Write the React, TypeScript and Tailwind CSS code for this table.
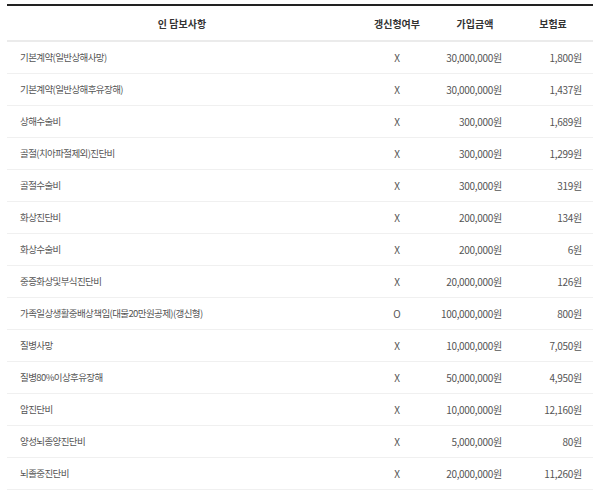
const rows: [string, string, string, string][] = [
  ["기본계약(일반상해사망)", "X", "30,000,000원", "1,800원"],
  ["기본계약(일반상해후유장해)", "X", "30,000,000원", "1,437원"],
  ["상해수술비", "X", "300,000원", "1,689원"],
  ["골절(치아파절제외)진단비", "X", "300,000원", "1,299원"],
  ["골절수술비", "X", "300,000원", "319원"],
  ["화상진단비", "X", "200,000원", "134원"],
  ["화상수술비", "X", "200,000원", "6원"],
  ["중증화상및부식진단비", "X", "20,000,000원", "126원"],
  ["가족일상생활중배상책임(대물20만원공제)(갱신형)", "O", "100,000,000원", "800원"],
  ["질병사망", "X", "10,000,000원", "7,050원"],
  ["질병80%이상후유장해", "X", "50,000,000원", "4,950원"],
  ["암진단비", "X", "10,000,000원", "12,160원"],
  ["양성뇌종양진단비", "X", "5,000,000원", "80원"],
  ["뇌졸중진단비", "X", "20,000,000원", "11,260원"],
];

export default function App() {
  return (
    <div className="w-[600px] h-[497px] bg-white pt-1 px-[7px] font-['Noto_Sans_CJK_KR',sans-serif] overflow-hidden">
      <table className="w-[586px] table-fixed border-collapse border-t-2 border-[#222]">
        <colgroup>
          <col className="w-[350px]" />
          <col className="w-[80px]" />
          <col className="w-[76px]" />
          <col className="w-[80px]" />
        </colgroup>
        <thead>
          <tr className="h-[36px] border-b-2 border-[#ebebeb] text-[10px] font-bold text-[#333]">
            <th className="text-center font-bold">인 담보사항</th>
            <th className="text-center font-bold">갱신형여부</th>
            <th className="text-center font-bold">가입금액</th>
            <th className="text-center font-bold">보험료</th>
          </tr>
        </thead>
        <tbody>
          {rows.map((r) => (
            <tr key={r[0]} className="h-[32px] border-b border-[#f0f0f0] text-[10px] text-[#555]">
              <td className="pl-[13px] text-[9.5px] tracking-[-0.6px]">{r[0]}</td>
              <td className="text-center">{r[1]}</td>
              <td className="text-right pr-[11px] tracking-[-0.3px]">{r[2]}</td>
              <td className="text-right pr-[11px] tracking-[-0.3px]">{r[3]}</td>
            </tr>
          ))}
        </tbody>
      </table>
    </div>
  );
}
